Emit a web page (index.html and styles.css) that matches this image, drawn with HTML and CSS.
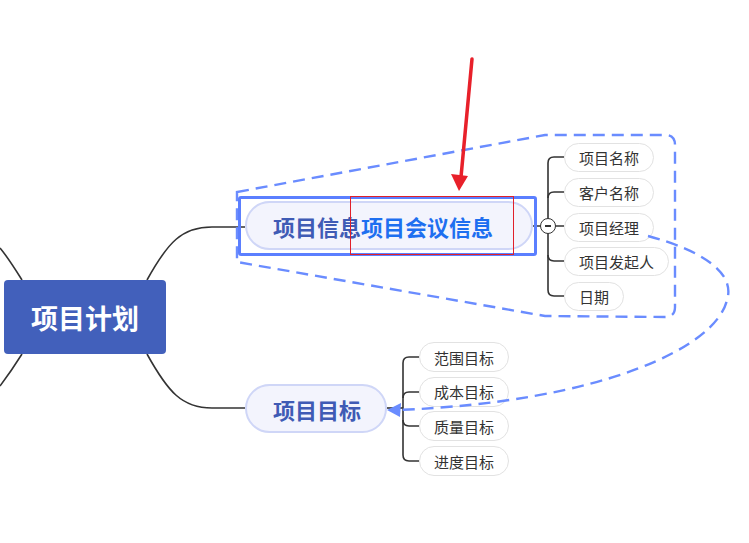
FILE: index.html
```html
<!DOCTYPE html>
<html lang="zh">
<head>
    <meta charset="UTF-8">
    <title>项目计划</title>
    <link rel="stylesheet" href="styles.css">
</head>
<body>
    <div class="canvas">
        <!-- 连线层 -->
        <svg class="links" width="749" height="543" viewBox="0 0 749 543">
            <g fill="none" stroke="#333" stroke-width="1.6">
                <path d="M22,280 C12,264 6,255 0,248"/>
                <path d="M22,354 C12,370 6,378 0,386"/>
                <path d="M147,280 C168,242 182,227 212,227 L245,227"/>
                <path d="M147,354 C168,392 182,408 212,408 L245,408"/>
                <path d="M533,226 L541,226 M555,226 L564,226"/>
                <path d="M564,157 L554,157 Q548,157 548,163 L548,290 Q548,296 554,296 L564,296"/>
                <path d="M548,198 Q548,192 554,192 L564,192"/>
                <path d="M548,255 Q548,261 554,261 L564,261"/>
                <path d="M387,408 L403,408"/>
                <path d="M419,357 L409,357 Q403,357 403,363 L403,455 Q403,461 409,461 L419,461"/>
                <path d="M403,398 Q403,392 409,392 L419,392"/>
                <path d="M403,420 Q403,426 409,426 L419,426"/>
            </g>
            <path class="dash" d="M237,192 L545,135 L665,135 Q675,135 675,145 L675,307 Q675,317 665,317 L545,316 L237,262 Z"/>
        </svg>

        <div class="root">项目计划</div>

        <div class="topic topic-info"><span class="old">项目信息</span><span class="new">项目会议信息</span></div>
        <div class="selected"></div>
        <div class="edit-box"></div>

        <div class="collapse"></div>

        <div class="children children-info">
            <div class="leaf">项目名称</div>
            <div class="leaf">客户名称</div>
            <div class="leaf">项目经理</div>
            <div class="leaf">项目发起人</div>
            <div class="leaf">日期</div>
        </div>

        <div class="topic topic-goal"><span class="old">项目目标</span></div>

        <div class="children children-goal">
            <div class="leaf">范围目标</div>
            <div class="leaf">成本目标</div>
            <div class="leaf">质量目标</div>
            <div class="leaf">进度目标</div>
        </div>

        <!-- 关联线和提示箭头 -->
        <svg class="overlay" width="749" height="543" viewBox="0 0 749 543">
            <path class="dash" d="M648,236 C700,250 736,272 727,300 C716,348 600,402 398,410"/>
            <polygon points="387,410 401,403 400,417" fill="#6a8cff"/>
            <path d="M472,59 L461,177" stroke="#e8202a" stroke-width="3.5" stroke-linecap="round" fill="none"/>
            <polygon points="459,191 451,174 468,176" fill="#e8202a"/>
        </svg>
    </div>
</body>
</html>
```

FILE: styles.css
```css
/* 基础 */
* {
    margin: 0;
    padding: 0;
    box-sizing: border-box;
}

body {
    background: #fff;
    overflow: hidden;
    font-family: "Noto Sans CJK SC", "Noto Sans", sans-serif;
}

/* 画布 */
.canvas {
    position: relative;
    width: 749px;
    height: 543px;
}

.links,
.overlay {
    position: absolute;
    left: 0;
    top: 0;
}

.overlay {
    z-index: 5;
}

.dash {
    fill: none;
    stroke: #6a8cff;
    stroke-width: 2.4;
    stroke-dasharray: 12 7;
}

/* 中心主题 */
.root {
    position: absolute;
    left: 4px;
    top: 280px;
    width: 162px;
    height: 74px;
    background: #4260bb;
    border-radius: 4px;
    color: #fff;
    font-size: 27px;
    font-weight: 700;
    display: flex;
    align-items: center;
    justify-content: center;
}

/* 分支主题 */
.topic {
    position: absolute;
    left: 245px;
    height: 49px;
    background: #f3f4fd;
    border: 2px solid #cfd6f7;
    border-radius: 25px;
    padding-left: 26px;
    font-size: 22px;
    font-weight: 700;
    display: flex;
    align-items: center;
    white-space: nowrap;
}

.topic-info {
    top: 201px;
    width: 288px;
}

.topic-goal {
    top: 384px;
    width: 142px;
}

.old {
    color: #3f5bb5;
}

.new {
    color: #1e6ff0;
}

.selected {
    position: absolute;
    left: 238px;
    top: 196px;
    width: 299px;
    height: 60px;
    border: 3px solid #5b7fff;
    border-radius: 3px;
}

.edit-box {
    position: absolute;
    left: 350px;
    top: 196px;
    width: 164px;
    height: 59px;
    border: 1px solid #e0202a;
}

/* 折叠按钮 */
.collapse {
    position: absolute;
    left: 540px;
    top: 218px;
    width: 16px;
    height: 16px;
    border: 1.5px solid #333;
    border-radius: 50%;
    background: #fff;
}

.collapse::after {
    content: '';
    position: absolute;
    left: 3.5px;
    top: 6px;
    width: 6px;
    height: 1.5px;
    background: #333;
}

/* 子主题 */
.children {
    position: absolute;
    display: flex;
    flex-direction: column;
    align-items: flex-start;
}

.children-info {
    left: 564px;
    top: 143px;
    gap: 5.75px;
}

.children-goal {
    left: 419px;
    top: 342px;
    gap: 4.7px;
}

.leaf {
    height: 29px;
    padding: 0 14px;
    border: 1px solid #e2e2e2;
    border-radius: 15px;
    background: #fff;
    color: #333;
    font-size: 15px;
    display: flex;
    align-items: center;
    white-space: nowrap;
}

.children-goal .leaf {
    height: 30px;
}
```
